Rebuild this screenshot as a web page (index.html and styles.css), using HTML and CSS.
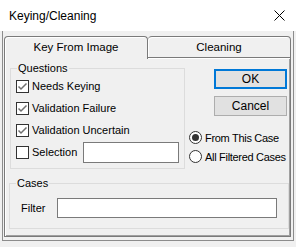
FILE: index.html
```html
<!DOCTYPE html>
<html lang="en">
<head>
    <meta charset="UTF-8">
    <title>Keying/Cleaning</title>
    <link rel="stylesheet" href="styles.css">
</head>
<body>
    <div class="dialog">
        <div class="title-bar">
            <span class="title">Keying/Cleaning</span>
            <svg class="close" width="11" height="11" viewBox="0 0 11 11">
                <path d="M0.5 0.5 L10.5 10.5 M10.5 0.5 L0.5 10.5" stroke="#000" stroke-width="1"/>
            </svg>
        </div>

        <div class="client">
            <div class="frame">
                <div class="tabs">
                    <div class="tab active">Key From Image</div>
                    <div class="tab">Cleaning</div>
                </div>

                <div class="tab-panel">
                    <div class="top-row">
                        <fieldset class="group questions">
                            <legend>Questions</legend>
                            <label class="check-row">
                                <span class="checkbox checked"></span>Needs Keying
                            </label>
                            <label class="check-row">
                                <span class="checkbox checked"></span>Validation Failure
                            </label>
                            <label class="check-row">
                                <span class="checkbox checked"></span>Validation Uncertain
                            </label>
                            <label class="check-row">
                                <span class="checkbox"></span>Selection
                                <span class="text-box selection-box"></span>
                            </label>
                        </fieldset>

                        <div class="side">
                            <button class="button default">OK</button>
                            <button class="button">Cancel</button>
                            <div class="radios">
                                <label class="radio-row"><span class="radio on"></span>From This Case</label>
                                <label class="radio-row"><span class="radio"></span>All Filtered Cases</label>
                            </div>
                        </div>
                    </div>

                    <fieldset class="group cases">
                        <legend>Cases</legend>
                        <div class="filter-row">
                            <span class="filter-label">Filter</span>
                            <span class="text-box filter-box"></span>
                        </div>
                    </fieldset>
                </div>
            </div>
        </div>
    </div>
</body>
</html>
```

FILE: styles.css
```css
body {
    margin: 0;
    font-family: "Liberation Sans", Arial, sans-serif;
    font-size: 11px;
    color: #000;
    background: #fff;
}
.dialog {
    width: 296px;
    height: 247px;
    display: flex;
    flex-direction: column;
    background: #f0f0f0;
}
.title-bar {
    height: 31px;
    flex: none;
    background: #fff;
    display: flex;
    align-items: center;
    justify-content: space-between;
    padding: 0 11px 0 9px;
    box-sizing: border-box;
}
.title {
    font-size: 12px;
}
.close {
    display: block;
}
.client {
    flex: 1;
    padding: 0 2px 5px 2px;
}
.frame {
    width: 292px;
    box-sizing: border-box;
    border: 1px solid #8c8c8c;
    border-top: none;
    padding: 5px 0 3px 1px;
}
.tabs {
    display: flex;
    height: 22px;
    position: relative;
    z-index: 1;
}
.tab {
    width: 144px;
    height: 22px;
    box-sizing: border-box;
    border: 1px solid #7a7a7a;
    border-bottom: none;
    border-radius: 4px 4px 0 0;
    text-align: center;
    line-height: 21px;
    font-size: 11.5px;
    background: #f0f0f0;
    box-shadow: inset 1px 1px 0 #fff;
}
.tab + .tab {
    width: 143px;
    border-bottom: 1px solid #7a7a7a;
    border-left: none;
}
.tab.active {
    height: 23px;
}
.tab-panel {
    height: 180px;
    box-sizing: border-box;
    border: 1px solid #7a7a7a;
    margin-top: -1px;
    width: 287px;
    padding: 3px 0 0 5px;
    box-shadow: inset 1px 1px 0 #fff, inset -1px -1px 0 #a0a0a0;
}
.top-row {
    display: flex;
}
.group {
    margin: 0;
    min-width: 0;
    border: 1px solid #dcdcdc;
    padding: 0 5px 5px 5px;
}
.group legend {
    padding: 0 1px;
    margin-left: 1px;
    line-height: 14px;
}
.questions {
    width: 175px;
    flex: none;
    box-sizing: border-box;
}
.check-row {
    display: flex;
    align-items: center;
    height: 22px;
    gap: 3px;
    white-space: nowrap;
}
.checkbox {
    width: 13px;
    height: 13px;
    box-sizing: border-box;
    border: 1px solid #333;
    background: #fff;
    flex: none;
}
.checkbox.checked {
    background: #fff url("data:image/svg+xml;utf8,<svg xmlns='http://www.w3.org/2000/svg' width='11' height='11'><path d='M1.5 5.5 L4 8 L9.5 2.5' stroke='%23707070' stroke-width='1.5' fill='none'/></svg>") no-repeat center;
}
.text-box {
    display: block;
    background: #fff;
    border: 1px solid #7a7a7a;
    box-sizing: border-box;
}
.selection-box {
    width: 96px;
    height: 21px;
    margin-left: auto;
}
.side {
    flex: 1;
    min-width: 0;
    display: flex;
    flex-direction: column;
    padding-top: 8px;
}
.button {
    width: 73px;
    height: 20px;
    margin: 0 0 7px 29px;
    font-family: inherit;
    font-size: 12px;
    background: #e1e1e1;
    border: 1px solid #adadad;
    padding: 0;
}
.button.default {
    border: 2px solid #0078d7;
}
.radios {
    padding: 8px 0 0 4px;
    display: flex;
    flex-direction: column;
    gap: 6px;
}
.radio-row {
    display: flex;
    align-items: center;
    gap: 3px;
    height: 13px;
    white-space: nowrap;
    letter-spacing: -0.3px;
}
.radio {
    width: 13px;
    height: 13px;
    box-sizing: border-box;
    border: 1px solid #333;
    border-radius: 50%;
    background: #fff;
    flex: none;
    display: flex;
    align-items: center;
    justify-content: center;
}
.radio.on::after {
    content: "";
    width: 7px;
    height: 7px;
    border-radius: 50%;
    background: #333;
}
.cases {
    width: 280px;
    box-sizing: border-box;
    margin: 7px 0 0 -1px;
    padding: 8px 11px 10px 11px;
}
.cases legend {
    margin-left: -5px;
}
.filter-row {
    display: flex;
    align-items: center;
}
.filter-label {
    width: 36px;
}
.filter-box {
    width: 220px;
    height: 20px;
}
```
